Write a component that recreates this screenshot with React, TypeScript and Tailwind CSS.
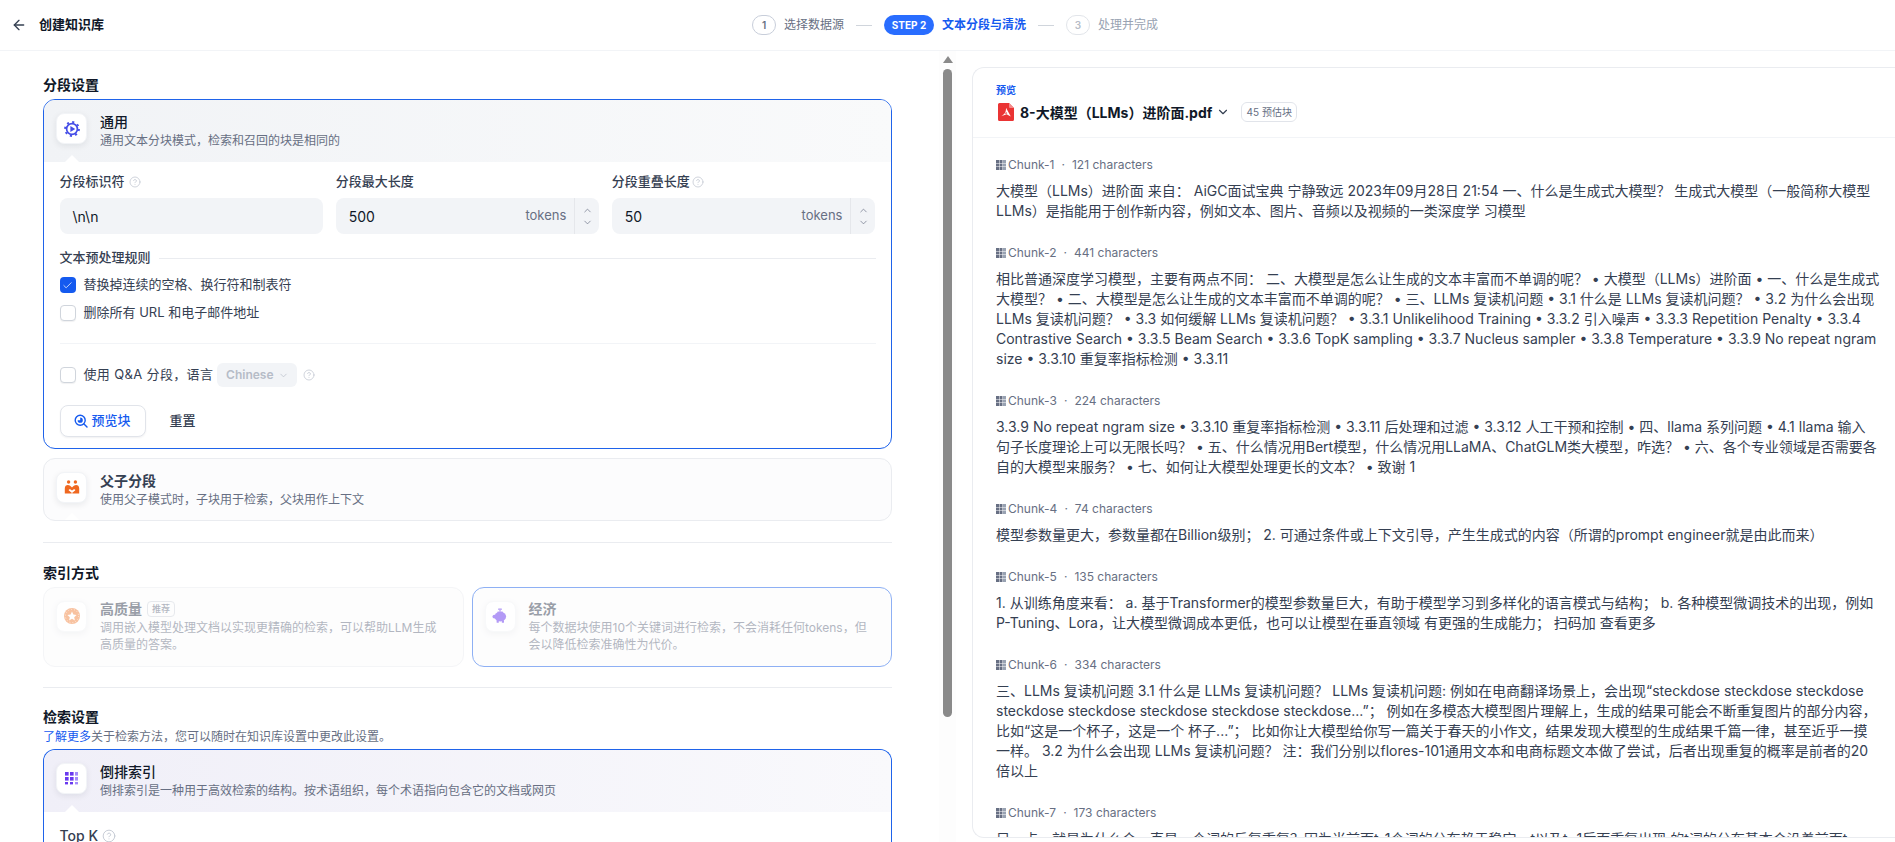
import React from "react";
import { ArrowLeft, ChevronDown, ChevronUp, CircleHelp, Check } from "lucide-react";

const Help = ({ s = 12 }: { s?: number }) => (
  <CircleHelp size={s} strokeWidth={1.5} className="text-[#c0c6d0] shrink-0" />
);

const GearPlay = () => (
  <svg width="16" height="16" viewBox="0 0 16 16" fill="none">
    <circle cx="8" cy="8" r="5.4" stroke="#444ce7" strokeWidth="1.7" />
    <circle cx="8" cy="8" r="7" stroke="#444ce7" strokeWidth="1.8" strokeDasharray="2.1 3.4" />
    <path d="M6.4 5 L11.2 8 L6.4 11 Z" fill="#444ce7" />
  </svg>
);

const Family = () => (
  <svg width="16" height="16" viewBox="0 0 16 16">
    <circle cx="4.6" cy="3" r="1.7" fill="#ef6820" />
    <circle cx="11.4" cy="3" r="1.7" fill="#ef6820" />
    <path d="M0.8 14.5 V9.5 C0.8 7 2.2 6 3.8 6 C5.6 6 6.6 7.2 8 8.4 C9.4 7.2 10.4 6 12.2 6 C13.8 6 15.2 7 15.2 9.5 V14.5 H0.8 Z" fill="#ef6820" />
    <path d="M8 14 L4.9 11.6 C4.2 10.8 5.2 9.8 6.2 10.3 L8 11.4 L9.8 10.3 C10.8 9.8 11.8 10.8 11.1 11.6 Z" fill="#fff" />
    <path d="M7.4 14.5 H8.6 V15 H7.4Z" fill="#fff" />
  </svg>
);

const Star = () => (
  <svg width="18" height="18" viewBox="0 0 18 18">
    <circle cx="9" cy="9" r="8" fill="#f38744" />
    <path d="M9 4.6 L10.4 7.6 L13.6 8 L11.2 10.2 L11.9 13.4 L9 11.8 L6.1 13.4 L6.8 10.2 L4.4 8 L7.6 7.6 Z" fill="#fff" />
    <circle cx="9" cy="9" r="6.6" fill="none" stroke="#fff" strokeWidth=".6" strokeDasharray="1 2" />
  </svg>
);

const Piggy = () => (
  <svg width="16" height="16" viewBox="0 0 16 16" fill="#6938ef">
    <rect x="6" y="0.6" width="4" height="1.2" rx=".6" />
    <rect x="7.4" y="1.6" width="1.2" height="2" />
    <ellipse cx="8.3" cy="8.6" rx="5.8" ry="4.9" />
    <circle cx="2.4" cy="8.6" r="1.9" />
    <rect x="4.6" y="12" width="2.2" height="2.8" rx=".6" />
    <rect x="9.8" y="12" width="2.2" height="2.8" rx=".6" />
    <path d="M5.5 3.6 H10.8 V5 H5.5Z" />
  </svg>
);

const GridIcon = () => (
  <svg width="16" height="16" viewBox="0 0 16 16">
    {[0, 1, 2].map((r) =>
      [0, 1, 2].map((c) => (
        <rect
          key={`${r}-${c}`}
          x={1 + c * 5}
          y={1 + r * 5}
          width={r === 2 || c === 2 ? 3 : 3.6}
          height={r === 2 ? 2.4 : 3.6}
          fill={c === 2 ? "#a48afb" : "#6938ef"}
        />
      ))
    )}
  </svg>
);

const ChunkIcon = () => (
  <svg width="10" height="10" viewBox="0 0 10 10" className="shrink-0">
    {[0, 1, 2].map((r) =>
      [0, 1, 2].map((c) => (
        <rect key={`${r}-${c}`} x={c * 3.5} y={r * 3.5} width="3" height="3" fill={c === 2 ? "#98a2b2" : "#676f83"} />
      ))
    )}
  </svg>
);

const PreviewIcon = () => (
  <svg width="14" height="14" viewBox="0 0 14 14" fill="none" className="shrink-0">
    <circle cx="6.2" cy="6.2" r="5" stroke="#155aef" strokeWidth="1.4" />
    <path d="M10 10 L13 13" stroke="#155aef" strokeWidth="1.4" strokeLinecap="round" />
    <path d="M6.2 3.6 A2.6 2.6 0 1 1 3.6 6.2 H6.2 Z" fill="#155aef" />
  </svg>
);

const PdfIcon = () => (
  <svg width="16" height="18" viewBox="0 0 16 18" className="shrink-0">
    <path d="M1.5 0 H11 L16 5 V16.5 A1.5 1.5 0 0 1 14.5 18 H1.5 A1.5 1.5 0 0 1 0 16.5 V1.5 A1.5 1.5 0 0 1 1.5 0Z" fill="#ea3434" />
    <path d="M11 0 L16 5 H12 A1 1 0 0 1 11 4Z" fill="#f58a8a" />
    <path d="M8 4.8 L12.8 13.6 L8.6 11.2 L3.2 13.2 C4.8 12.4 6.4 11 7.4 9 C7.9 8 8 6.4 8 4.8Z M8.1 8.9 L6.9 10.7 L9.4 10.4Z" fill="#fff" fillRule="evenodd" />
  </svg>
);

const IconBox = ({ children }: { children: React.ReactNode }) => (
  <div className="flex h-[31px] w-[31px] shrink-0 items-center justify-center rounded-lg border border-[#f2f4f7] bg-white shadow-[0_2px_6px_rgba(16,24,40,0.08)]">
    {children}
  </div>
);

const Notch = ({ color = "bg-white" }: { color?: string }) => (
  <div className={`absolute bottom-0 left-[21px] h-[7px] w-[14px] ${color} [clip-path:polygon(50%_0,100%_100%,0_100%)]`} />
);

const Check16 = ({ on = false }: { on?: boolean }) =>
  on ? (
    <div className="flex h-4 w-4 shrink-0 items-center justify-center rounded bg-[#155aef]">
      <Check size={11} strokeWidth={1.6} className="text-white" />
    </div>
  ) : (
    <div className="h-4 w-4 shrink-0 rounded border border-[#d0d5dc] bg-white shadow-[0_1px_1px_rgba(16,24,40,0.06)]" />
  );

const NumberField = ({ value, unit = "tokens" }: { value: string; unit?: string }) => (
  <div className="flex h-9 items-center rounded-lg bg-[#f2f4f7]">
    <span className="flex-1 pl-[13px] text-[14px] text-[#101828]">{value}</span>
    <span className="pr-2 text-[13px] text-[#676f83]">{unit}</span>
    <div className="flex h-full w-[25px] flex-col items-center justify-center gap-[1px] border-l border-[#e5e7eb] text-[#676f83]">
      <ChevronUp size={11} strokeWidth={1.5} />
      <ChevronDown size={11} strokeWidth={1.5} />
    </div>
  </div>
);

const Divider = () => <div className="h-px bg-[#eaecf0]" />;

const SectionTitle = ({ children }: { children: React.ReactNode }) => (
  <div className="text-[14px] font-semibold leading-5 text-[#101828]">{children}</div>
);

const chunks: { n: number; c: number; lines: string[] }[] = [
  {
    n: 1,
    c: 121,
    lines: [
      "大模型（LLMs）进阶面 来自： AiGC面试宝典 宁静致远 2023年09月28日 21:54 一、什么是生成式大模型？ 生成式大模型（一般简称大模型",
      "LLMs）是指能用于创作新内容，例如文本、图片、音频以及视频的一类深度学 习模型",
    ],
  },
  {
    n: 2,
    c: 441,
    lines: [
      "相比普通深度学习模型，主要有两点不同： 二、大模型是怎么让生成的文本丰富而不单调的呢？ • 大模型（LLMs）进阶面 • 一、什么是生成式",
      "大模型？ • 二、大模型是怎么让生成的文本丰富而不单调的呢？ • 三、LLMs 复读机问题 • 3.1 什么是 LLMs 复读机问题？ • 3.2 为什么会出现",
      "LLMs 复读机问题？ • 3.3 如何缓解 LLMs 复读机问题？ • 3.3.1 Unlikelihood Training • 3.3.2 引入噪声 • 3.3.3 Repetition Penalty • 3.3.4",
      "Contrastive Search • 3.3.5 Beam Search • 3.3.6 TopK sampling • 3.3.7 Nucleus sampler • 3.3.8 Temperature • 3.3.9 No repeat ngram",
      "size • 3.3.10 重复率指标检测 • 3.3.11",
    ],
  },
  {
    n: 3,
    c: 224,
    lines: [
      "3.3.9 No repeat ngram size • 3.3.10 重复率指标检测 • 3.3.11 后处理和过滤 • 3.3.12 人工干预和控制 • 四、llama 系列问题 • 4.1 llama 输入",
      "句子长度理论上可以无限长吗？ • 五、什么情况用Bert模型，什么情况用LLaMA、ChatGLM类大模型，咋选？ • 六、各个专业领域是否需要各",
      "自的大模型来服务？ • 七、如何让大模型处理更长的文本？ • 致谢 1",
    ],
  },
  {
    n: 4,
    c: 74,
    lines: ["模型参数量更大，参数量都在Billion级别； 2. 可通过条件或上下文引导，产生生成式的内容（所谓的prompt engineer就是由此而来）"],
  },
  {
    n: 5,
    c: 135,
    lines: [
      "1. 从训练角度来看： a. 基于Transformer的模型参数量巨大，有助于模型学习到多样化的语言模式与结构； b. 各种模型微调技术的出现，例如",
      "P-Tuning、Lora，让大模型微调成本更低，也可以让模型在垂直领域 有更强的生成能力； 扫码加 查看更多",
    ],
  },
  {
    n: 6,
    c: 334,
    lines: [
      "三、LLMs 复读机问题 3.1 什么是 LLMs 复读机问题？ LLMs 复读机问题: 例如在电商翻译场景上，会出现“steckdose steckdose steckdose",
      "steckdose steckdose steckdose steckdose steckdose...”； 例如在多模态大模型图片理解上，生成的结果可能会不断重复图片的部分内容，",
      "比如“这是一个杯子，这是一个 杯子...”； 比如你让大模型给你写一篇关于春天的小作文，结果发现大模型的生成结果千篇一律，甚至近乎一摸",
      "一样。 3.2 为什么会出现 LLMs 复读机问题？ 注：我们分别以flores-101通用文本和电商标题文本做了尝试，后者出现重复的概率是前者的20",
      "倍以上",
    ],
  },
  {
    n: 7,
    c: 173,
    lines: ["另一点，就是为什么会一直是一个词的反复重复？因为当前面t-1个词的分布趋于稳定，t以及t+1后面重复出现 的t词的分布基本会沿着前面t"],
  },
];

export default function App() {
  return (
    <div className="flex h-screen w-full flex-col overflow-hidden bg-white [font-family:'Inter','Noto_Sans_CJK_SC',sans-serif]">
      {/* top bar */}
      <header className="flex h-[51px] shrink-0 items-center border-b border-[#f2f4f7]">
        <div className="flex w-[752px] items-center pl-[11px]">
          <ArrowLeft size={16} strokeWidth={2} className="text-[#354052]" />
          <span className="ml-3 text-[13px] font-semibold text-[#101828]">创建知识库</span>
        </div>
        <div className="flex items-center">
          <div className="flex h-5 w-6 items-center justify-center rounded-full border border-[#c8ceda] text-[10px] font-semibold text-[#676f83]">1</div>
          <span className="ml-2 text-[12px] text-[#676f83]">选择数据源</span>
          <div className="mx-3 h-px w-4 bg-[#d0d5dc]" />
          <div className="flex h-5 w-[50px] items-center justify-center rounded-full bg-[#296dff] text-[10px] font-bold text-white">STEP 2</div>
          <span className="ml-2 text-[12px] font-semibold text-[#155aef]">文本分段与清洗</span>
          <div className="mx-3 h-px w-4 bg-[#d0d5dc]" />
          <div className="flex h-5 w-6 items-center justify-center rounded-full border border-[#e2e5ea] text-[10px] font-semibold text-[#b6bcc7]">3</div>
          <span className="ml-2 text-[12px] text-[#98a2b2]">处理并完成</span>
        </div>
      </header>

      <div className="flex min-h-0 flex-1">
        {/* left settings column */}
        <main className="w-[939px] shrink-0 overflow-hidden pl-[43px] pr-[47px] pt-6">
          <SectionTitle>分段设置</SectionTitle>
          <section className="mt-1 overflow-hidden rounded-xl border-[1.5px] border-[#1f63ea]">
            <div className="relative flex h-[62px] items-start gap-[13px] bg-gradient-to-r from-[#f1f3f6] to-[#f9fafb] pl-[12px] pt-[13px]">
              <IconBox>
                <GearPlay />
              </IconBox>
              <div className="-mt-[1px]">
                <div className="text-[14px] font-medium leading-5 text-[#101828]">通用</div>
                <div className="text-[12px] leading-[17px] text-[#676f83]">通用文本分块模式，检索和召回的块是相同的</div>
              </div>
              <Notch />
            </div>
            <div className="px-[15.5px] pb-[11px] pt-[10px]">
              <div className="grid grid-cols-3 gap-x-[12.5px]">
                <div>
                  <div className="flex h-5 items-center gap-1 text-[13px] font-medium text-[#354052]">
                    分段标识符 <Help />
                  </div>
                  <div className="mt-1.5 flex h-9 items-center rounded-lg bg-[#f2f4f7] pl-[13px] text-[14px] text-[#101828]">\n\n</div>
                </div>
                <div>
                  <div className="flex h-5 items-center text-[13px] font-medium text-[#354052]">分段最大长度</div>
                  <div className="mt-1.5">
                    <NumberField value="500" />
                  </div>
                </div>
                <div>
                  <div className="flex h-5 items-center gap-[2px] text-[13px] font-medium text-[#354052]">
                    分段重叠长度 <Help />
                  </div>
                  <div className="mt-1.5">
                    <NumberField value="50" />
                  </div>
                </div>
              </div>

              <div className="mt-[14px] flex h-5 items-center gap-2 text-[13px] font-medium text-[#354052]">
                文本预处理规则
                <div className="h-px flex-1 bg-[#eaecf0]" />
              </div>
              <div className="mt-[9px] flex h-4 items-center gap-2 text-[13px] text-[#354052]">
                <Check16 on /> 替换掉连续的空格、换行符和制表符
              </div>
              <div className="mt-3 flex h-4 items-center gap-2 text-[13px] text-[#354052]">
                <Check16 /> 删除所有 URL 和电子邮件地址
              </div>
              <div className="mt-[22px] h-px bg-[#f2f4f7]" />
              <div className="mt-[19px] flex h-6 items-center text-[13px] text-[#354052]">
                <Check16 />
                <span className="ml-2 tracking-[0.35px]">使用 Q&amp;A 分段，语言</span>
                <div className="ml-1 flex h-6 w-20 items-center justify-center gap-1 rounded-md bg-[#f2f4f7] text-[12px] font-semibold text-[#b6bcc7]">
                  Chinese <ChevronDown size={11} strokeWidth={1.5} />
                </div>
                <div className="ml-[6px]">
                  <Help />
                </div>
              </div>
              <div className="mt-[18px] flex items-center">
                <button className="flex h-8 w-[86px] items-center justify-center gap-[3px] rounded-lg border border-[#e1e4ea] bg-white text-[13px] font-medium text-[#155aef] shadow-[0_1px_2px_rgba(16,24,40,0.06)]">
                  <PreviewIcon /> 预览块
                </button>
                <button className="ml-6 text-[13px] font-medium text-[#354052]">重置</button>
              </div>
            </div>
          </section>

          <section className="relative mt-[9px] flex h-[63px] items-start gap-[13px] rounded-xl border-[1.5px] border-[#eaecf0] bg-[#fcfcfd] pl-[12px] pt-[12.5px]">
            <IconBox>
              <Family />
            </IconBox>
            <div className="-mt-[0.5px]">
              <div className="text-[14px] font-semibold leading-5 text-[#354052]">父子分段</div>
              <div className="text-[12px] leading-[17px] text-[#676f83]">使用父子模式时，子块用于检索，父块用作上下文</div>
            </div>
            <Notch />
          </section>

          <div className="mt-[21px]">
            <Divider />
          </div>
          <div className="mt-5">
            <SectionTitle>索引方式</SectionTitle>
          </div>
          <div className="mt-1 grid grid-cols-2 gap-2">
            <section className="flex h-20 items-start gap-[13px] rounded-xl border-[1.5px] border-[#eaecf0] bg-[#fcfcfd] pl-[12px] pt-[12.5px] opacity-50">
              <IconBox>
                <Star />
              </IconBox>
              <div className="-mt-[2px] pr-5">
                <div className="flex h-5 items-center gap-[5px] text-[14px] font-semibold text-[#354052]">
                  高质量
                  <span className="flex h-4 items-center rounded border border-[#d0d5dc] px-[4px] text-[9px] font-medium text-[#676f83]">推荐</span>
                </div>
                <div className="text-[12px] leading-[17px] text-[#676f83]">调用嵌入模型处理文档以实现更精确的检索，可以帮助LLM生成高质量的答案。</div>
              </div>
            </section>
            <section className="flex h-20 items-start gap-[13px] rounded-xl border-[1.5px] border-[#1f63ea] bg-[#fcfcfd] pl-[12px] pt-[12.5px] opacity-50">
              <IconBox>
                <Piggy />
              </IconBox>
              <div className="-mt-[2px] pr-5">
                <div className="flex h-5 items-center text-[14px] font-semibold text-[#354052]">经济</div>
                <div className="text-[12px] leading-[17px] text-[#676f83]">每个数据块使用10个关键词进行检索，不会消耗任何tokens，但会以降低检索准确性为代价。</div>
              </div>
            </section>
          </div>
          <div className="mt-5">
            <Divider />
          </div>
          <div className="mt-[19px]">
            <SectionTitle>检索设置</SectionTitle>
          </div>
          <div className="mt-[2px] text-[12px] leading-4 text-[#676f83]">
            <span className="text-[#155aef]">了解更多</span>关于检索方法，您可以随时在知识库设置中更改此设置。
          </div>
          <section className="mt-1 rounded-t-xl border-[1.5px] border-b-0 border-[#1f63ea]">
            <div className="relative flex h-[62px] items-start gap-[13px] rounded-t-xl bg-gradient-to-r from-[#f0eff8] to-[#f9f9fc] pl-[12px] pt-[13px]">
              <IconBox>
                <GridIcon />
              </IconBox>
              <div className="-mt-[1px]">
                <div className="text-[14px] font-medium leading-5 text-[#101828]">倒排索引</div>
                <div className="text-[12px] leading-[17px] text-[#676f83]">倒排索引是一种用于高效检索的结构。按术语组织，每个术语指向包含它的文档或网页</div>
              </div>
              <Notch />
            </div>
            <div className="flex items-center gap-1 px-[15.5px] pt-[14px] text-[14px] font-medium leading-5 text-[#354052]">
              Top K <Help s={14} />
            </div>
          </section>
        </main>

        {/* scrollbar */}
        <div className="flex w-[17px] shrink-0 flex-col items-center bg-[#fdfdfd] pt-[5px]">
          <div className="h-0 w-0 border-x-[5px] border-b-[7px] border-x-transparent border-b-[#8a8a8a]" />
          <div className="mt-[6px] h-[648px] w-[9px] rounded-full bg-[#8a8a8a]" />
        </div>

        {/* preview */}
        <aside className="ml-4 mb-[4px] mt-4 flex min-w-0 flex-1 flex-col overflow-hidden rounded-l-xl border border-r-0 border-[#eaecf0] bg-white">
          <div className="h-[70px] shrink-0 border-b border-[#f2f4f7] pl-[23px] pt-[14px]">
            <div className="text-[10px] font-semibold leading-4 text-[#155aef]">预览</div>
            <div className="mt-[4px] flex h-5 items-center">
              <div className="ml-[2px]">
                <PdfIcon />
              </div>
              <span className="ml-[6px] text-[14px] font-bold text-[#101828]">8-大模型（LLMs）进阶面.pdf</span>
              <ChevronDown size={14} strokeWidth={2} className="ml-[4px] text-[#354052]" />
              <span className="ml-[11px] flex h-5 w-14 items-center justify-center rounded-md border border-[#e1e4ea] text-[10px] text-[#676f83]">45 预估块</span>
            </div>
          </div>
          <div className="flex flex-col gap-[22px] overflow-hidden pl-[23px] pt-[17px]">
            {chunks.map((ch) => (
              <div key={ch.n}>
                <div className="flex h-5 items-center text-[12px] text-[#676f83]">
                  <ChunkIcon />
                  <span className="ml-[2px]">Chunk-{ch.n}</span>
                  <span className="mx-[7px]">·</span>
                  <span>{ch.c} characters</span>
                </div>
                <div className="mt-1.5 text-[14px] leading-5 text-[#354052]">
                  {ch.lines.map((l, i) => (
                    <div key={i} className="whitespace-nowrap">
                      {l}
                    </div>
                  ))}
                </div>
              </div>
            ))}
          </div>
        </aside>
      </div>
    </div>
  );
}
